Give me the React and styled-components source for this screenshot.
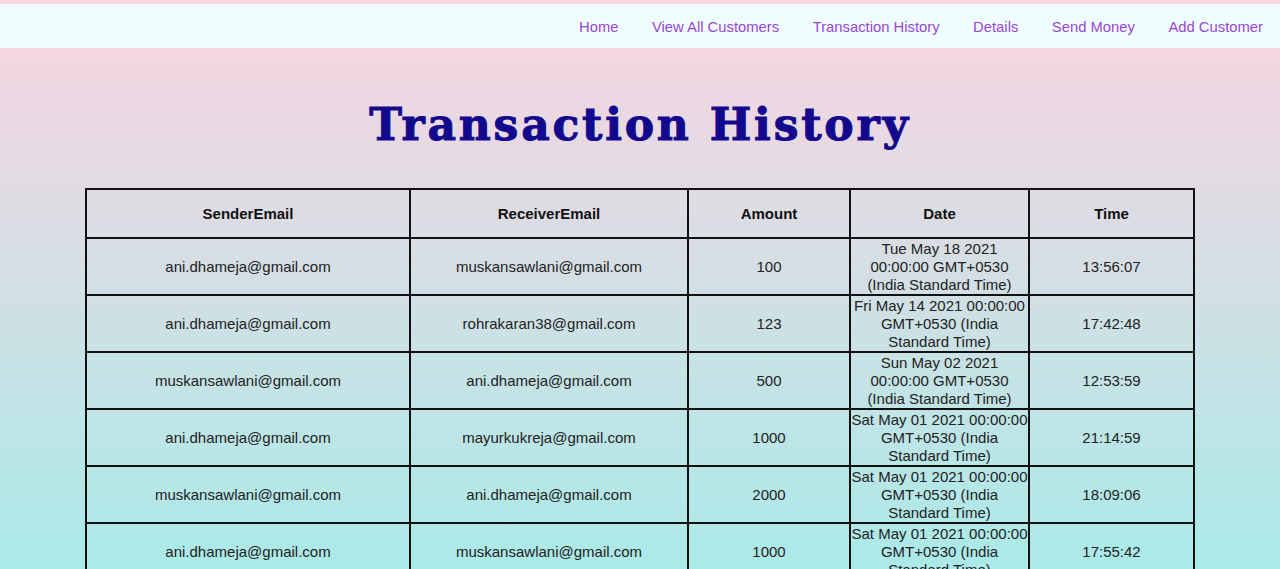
import React from "react";
import styled, { createGlobalStyle } from "styled-components";

const GlobalStyle = createGlobalStyle`
  body {
    margin: 0;
    padding-top: 4px;
    font-family: "Liberation Sans", Arial, sans-serif;
    background: linear-gradient(to bottom, #fbd4e1 0%, #aaeae8 100%) fixed;
    min-height: 100vh;
  }
`;

const Nav = styled.nav`
  display: flex;
  justify-content: flex-end;
  align-items: center;
  height: 44px;
  background: #f0fdff;
`;

const NavLink = styled.a`
  padding: 2px 17px 0 16.5px;
  font-size: 14.8px;
  color: #9a46d4;
  text-decoration: none;
  cursor: pointer;
`;

const Title = styled.h1`
  margin: 51px 0 36px;
  text-align: center;
  font-family: "DejaVu Serif", "Liberation Serif", serif;
  font-weight: bold;
  font-size: 44px;
  letter-spacing: 2.8px;
  line-height: 1.2;
  color: #12098e;
  -webkit-text-stroke: 1px #12098e;
`;

const Table = styled.table`
  width: 1108px;
  margin: 0 auto;
  table-layout: fixed;
  border-collapse: collapse;
  font-size: 15px;
  color: #222;
`;

const Th = styled.th`
  border: 2px solid #111;
  padding: 15px 0 14px;
  line-height: 18px;
  font-weight: bold;
  color: #111;
`;

const Td = styled.td`
  border: 2px solid #111;
  padding: 1px 0 0;
  line-height: 18px;
  text-align: center;
`;

const columns = [
  { label: "SenderEmail", width: 324 },
  { label: "ReceiverEmail", width: 278 },
  { label: "Amount", width: 162 },
  { label: "Date", width: 179 },
  { label: "Time", width: 165 },
];

const transactions = [
  ["ani.dhameja@gmail.com", "muskansawlani@gmail.com", "100", "Tue May 18 2021 00:00:00 GMT+0530 (India Standard Time)", "13:56:07"],
  ["ani.dhameja@gmail.com", "rohrakaran38@gmail.com", "123", "Fri May 14 2021 00:00:00 GMT+0530 (India Standard Time)", "17:42:48"],
  ["muskansawlani@gmail.com", "ani.dhameja@gmail.com", "500", "Sun May 02 2021 00:00:00 GMT+0530 (India Standard Time)", "12:53:59"],
  ["ani.dhameja@gmail.com", "mayurkukreja@gmail.com", "1000", "Sat May 01 2021 00:00:00 GMT+0530 (India Standard Time)", "21:14:59"],
  ["muskansawlani@gmail.com", "ani.dhameja@gmail.com", "2000", "Sat May 01 2021 00:00:00 GMT+0530 (India Standard Time)", "18:09:06"],
  ["ani.dhameja@gmail.com", "muskansawlani@gmail.com", "1000", "Sat May 01 2021 00:00:00 GMT+0530 (India Standard Time)", "17:55:42"],
];

const links = ["Home", "View All Customers", "Transaction History", "Details", "Send Money", "Add Customer"];

function App() {
  return (
    <div>
      <GlobalStyle />
      <Nav>
        {links.map((l) => (
          <NavLink key={l}>{l}</NavLink>
        ))}
      </Nav>
      <Title>Transaction History</Title>
      <Table>
        <colgroup>
          {columns.map((c) => (
            <col key={c.label} style={{ width: c.width }} />
          ))}
        </colgroup>
        <thead>
          <tr>
            {columns.map((c) => (
              <Th key={c.label}>{c.label}</Th>
            ))}
          </tr>
        </thead>
        <tbody>
          {transactions.map((row, i) => (
            <tr key={i}>
              {row.map((cell, j) => (
                <Td key={j}>{cell}</Td>
              ))}
            </tr>
          ))}
        </tbody>
      </Table>
    </div>
  );
}

export default App;
